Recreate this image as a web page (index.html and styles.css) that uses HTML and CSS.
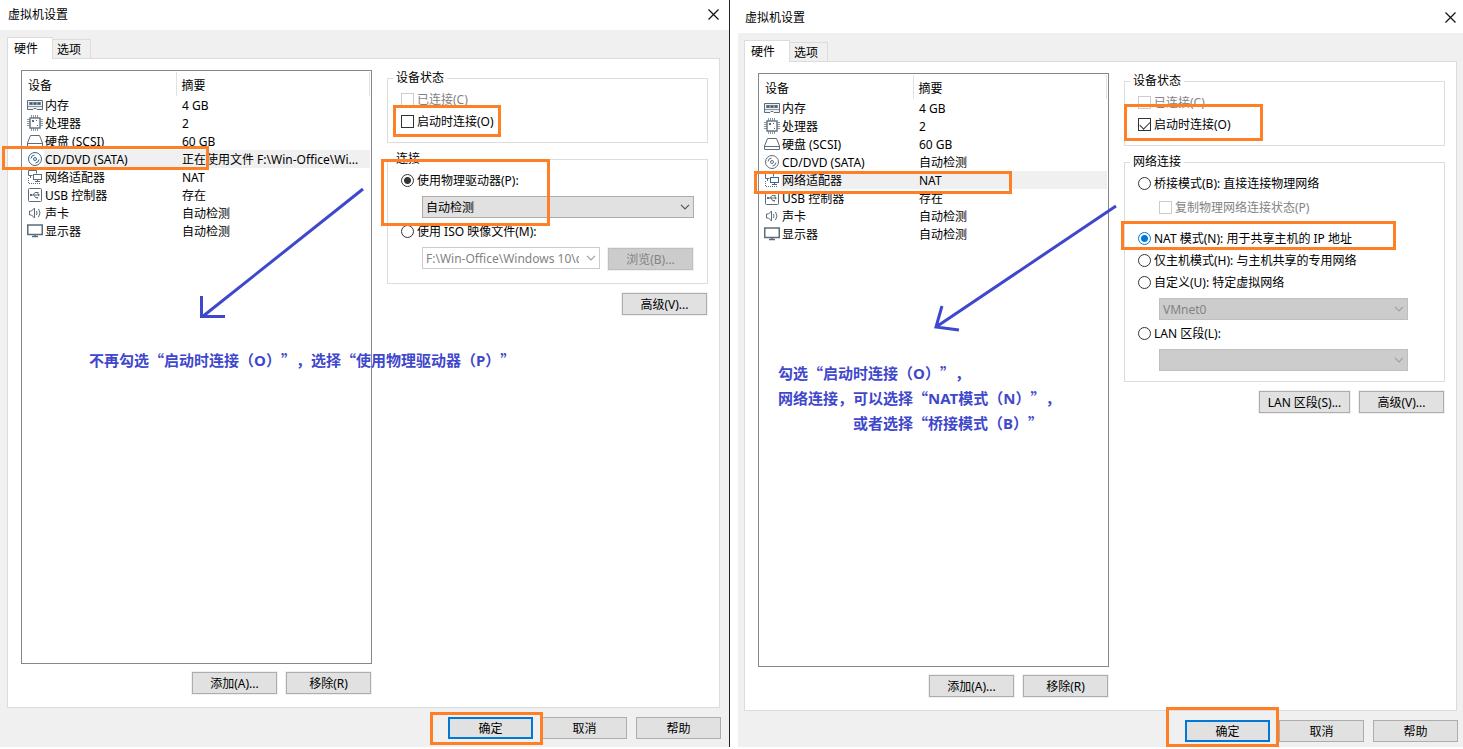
FILE: index.html
```html
<!DOCTYPE html>
<html lang="zh-CN">
<head>
<meta charset="utf-8">
<title>虚拟机设置</title>
<link rel="stylesheet" href="styles.css">
</head>
<body>
<svg class="sprite" aria-hidden="true">
  <symbol id="memory" viewBox="0 0 16 16"><path d="M.5 3.500h15v9H10l-1-1H7l-1 1H.5z" fill="#eef1f3" stroke="#5c6c7a"/><path d="M2 5h12v3H2z" fill="#8794a0"/><path d="M3 5.500h2v2H3zM7 5.500h2v2H7zM11 5.500h2v2h-2z" fill="#4a5a68"/><path d="M1 9.500h14" stroke="#8794a0"/></symbol>
  <symbol id="cpu" viewBox="0 0 16 16"><path d="M4.500 0v3M6.500 0v3M8.500 0v3M10.500 0v3M4.500 13v3M6.500 13v3M8.500 13v3M10.500 13v3M0 4.500h3M0 6.500h3M0 8.500h3M0 10.500h3M13 4.500h3M13 6.500h3M13 8.500h3M13 10.500h3" stroke="#8b97a2"/><rect x="3" y="3" width="10" height="10" fill="#fff" stroke="#6c7a87" stroke-width="1.500"/><path d="M5 5h2v2H5zM10 10h1v1h-1zM9 5h1v1H9z" fill="#5c6c7a"/></symbol>
  <symbol id="disk" viewBox="0 0 16 16"><path d="M3.500 2.500h9l3 7.500v3.500H.5V10z" fill="#fff" stroke="#5c6c7a"/><path d="M.5 10.500h15" stroke="#5c6c7a"/></symbol>
  <symbol id="disc" viewBox="0 0 16 16"><circle cx="8" cy="8" r="6.500" fill="#fff" stroke="currentColor"/><circle cx="8" cy="8" r="1.500" fill="none" stroke="currentColor"/><path d="M4 7.500A4 4 0 0 1 7.500 4M12 8.500A4 4 0 0 1 8.500 12" fill="none" stroke="currentColor"/></symbol>
  <symbol id="network" viewBox="0 0 16 16"><path d="M1.500 6.500v-5h8v3M1.500 6.500h4M3.500 7v2" fill="none" stroke="#5c6c7a"/><path d="M1.500 9v6M2 14.500h12" stroke="#5c6c7a" stroke-dasharray="1 1"/><rect x="6.500" y="5.500" width="8" height="5" fill="#fff" stroke="currentColor"/><path d="M10.500 11v2M8 12.500h5" stroke="currentColor"/></symbol>
  <symbol id="usb" viewBox="0 0 16 16"><rect x="1.500" y="1.500" width="13" height="13" rx="1" fill="#fff" stroke="#5c6c7a"/><path d="M4 8h8M6 8l2-2.500h2M7 8l1.500 2.500H10" fill="none" stroke="#5c6c7a"/><path d="M3 7h2v2H3zM10 5h1.500v1.500H10zM9.500 10H11v1.500H9.500zM11 6.500L13 8l-2 1.500z" fill="#5c6c7a"/></symbol>
  <symbol id="sound" viewBox="0 0 16 16"><path d="M2.500 6v4h2l3 3V3l-3 3z" fill="#fff" stroke="#5c6c7a"/><path d="M9.500 6q1 2 0 4M11.500 4q3 4 0 8" fill="none" stroke="#5c6c7a"/></symbol>
  <symbol id="display" viewBox="0 0 16 16"><rect x=".75" y="2" width="14.500" height="9.500" fill="#fff" stroke="#5c6c7a" stroke-width="1.500"/><path d="M5 13.500h6M8 12v2" stroke="#5c6c7a" stroke-width="1.500"/></symbol>
  <symbol id="close" viewBox="0 0 11 11"><path d="M.5.5l10 10M10.500.5l-10 10" stroke="#111" stroke-width="1.200"/></symbol>
  <symbol id="chevron" viewBox="0 0 10 6"><path d="M1 .8l4 4 4-4" fill="none" stroke="currentColor" stroke-width="1.200"/></symbol>
</svg>

<main class="desktop">
  <section class="window window-left" aria-label="虚拟机设置">
    <header class="titlebar">
      <h1 class="title">虚拟机设置</h1>
      <button class="close" type="button" aria-label="关闭"><svg><use href="#close"/></svg></button>
    </header>
    <div class="body">
      <nav class="tabs">
        <button class="tab tab-active" type="button">硬件</button>
        <button class="tab" type="button">选项</button>
      </nav>
      <div class="panel">
        <div class="devices">
          <div class="list">
            <table class="table">
              <thead><tr><th>设备</th><th>摘要</th></tr></thead>
              <tbody>
                <tr><td><div class="device"><svg><use href="#memory"/></svg><span>内存</span></div></td><td>4 GB</td></tr>
                <tr><td><div class="device"><svg><use href="#cpu"/></svg><span>处理器</span></div></td><td>2</td></tr>
                <tr><td><div class="device"><svg><use href="#disk"/></svg><span>硬盘 (SCSI)</span></div></td><td>60 GB</td></tr>
                <tr class="selected"><td><div class="device"><svg><use href="#disc"/></svg><span>CD/DVD (SATA)</span></div></td><td>正在使用文件 F:\Win-Office\Wi...</td></tr>
                <tr><td><div class="device"><svg><use href="#network"/></svg><span>网络适配器</span></div></td><td>NAT</td></tr>
                <tr><td><div class="device"><svg><use href="#usb"/></svg><span>USB 控制器</span></div></td><td>存在</td></tr>
                <tr><td><div class="device"><svg><use href="#sound"/></svg><span>声卡</span></div></td><td>自动检测</td></tr>
                <tr><td><div class="device"><svg><use href="#display"/></svg><span>显示器</span></div></td><td>自动检测</td></tr>
              </tbody>
            </table>
          </div>
          <div class="actions">
            <button class="button" type="button">添加(A)...</button>
            <button class="button" type="button">移除(R)</button>
          </div>
        </div>
        <form class="settings">
          <fieldset class="group">
            <legend>设备状态</legend>
            <label class="option off"><input type="checkbox" disabled>已连接(C)</label>
            <label class="option next"><input type="checkbox">启动时连接(O)</label>
          </fieldset>
          <fieldset class="group group-tall">
            <legend>连接</legend>
            <label class="option"><input type="radio" name="source" checked>使用物理驱动器(P):</label>
            <div class="combo">
              <select aria-label="物理驱动器"><option>自动检测</option></select>
              <svg><use href="#chevron"/></svg>
            </div>
            <label class="option after"><input type="radio" name="source">使用 ISO 映像文件(M):</label>
            <div class="file">
              <div class="combo combo-edit">
                <input type="text" aria-label="映像文件" value="F:\Win-Office\Windows 10\cn_windows_10.iso" disabled>
                <svg><use href="#chevron"/></svg>
              </div>
              <button class="button" type="button" disabled>浏览(B)...</button>
            </div>
          </fieldset>
          <div class="actions more"><button class="button" type="button">高级(V)...</button></div>
        </form>
      </div>
      <footer class="footer">
        <button class="button primary" type="button">确定</button>
        <button class="button" type="button">取消</button>
        <button class="button" type="button">帮助</button>
      </footer>
    </div>
    <i class="mark mark-disc"></i>
    <i class="mark mark-connect"></i>
    <i class="mark mark-drive"></i>
    <i class="mark mark-ok"></i>
    <svg class="arrow arrow-left" viewBox="0 0 166 134"><path d="M164 2L3 130M2.500 109v20.500H26" /></svg>
    <p class="note note-left">不再勾选“启动时连接（<b>O</b>）”，选择“使用物理驱动器（<b>P</b>）”</p>
  </section>

  <section class="window window-right" aria-label="虚拟机设置">
    <header class="titlebar">
      <h1 class="title">虚拟机设置</h1>
      <button class="close" type="button" aria-label="关闭"><svg><use href="#close"/></svg></button>
    </header>
    <div class="body">
      <nav class="tabs">
        <button class="tab tab-active" type="button">硬件</button>
        <button class="tab" type="button">选项</button>
      </nav>
      <div class="panel">
        <div class="devices">
          <div class="list">
            <table class="table">
              <thead><tr><th>设备</th><th>摘要</th></tr></thead>
              <tbody>
                <tr><td><div class="device"><svg><use href="#memory"/></svg><span>内存</span></div></td><td>4 GB</td></tr>
                <tr><td><div class="device"><svg><use href="#cpu"/></svg><span>处理器</span></div></td><td>2</td></tr>
                <tr><td><div class="device"><svg><use href="#disk"/></svg><span>硬盘 (SCSI)</span></div></td><td>60 GB</td></tr>
                <tr><td><div class="device"><svg><use href="#disc"/></svg><span>CD/DVD (SATA)</span></div></td><td>自动检测</td></tr>
                <tr class="selected"><td><div class="device"><svg><use href="#network"/></svg><span>网络适配器</span></div></td><td>NAT</td></tr>
                <tr><td><div class="device"><svg><use href="#usb"/></svg><span>USB 控制器</span></div></td><td>存在</td></tr>
                <tr><td><div class="device"><svg><use href="#sound"/></svg><span>声卡</span></div></td><td>自动检测</td></tr>
                <tr><td><div class="device"><svg><use href="#display"/></svg><span>显示器</span></div></td><td>自动检测</td></tr>
              </tbody>
            </table>
          </div>
          <div class="actions">
            <button class="button" type="button">添加(A)...</button>
            <button class="button" type="button">移除(R)</button>
          </div>
        </div>
        <form class="settings">
          <fieldset class="group">
            <legend>设备状态</legend>
            <label class="option off"><input type="checkbox" disabled>已连接(C)</label>
            <label class="option next"><input type="checkbox" checked>启动时连接(O)</label>
          </fieldset>
          <fieldset class="group">
            <legend>网络连接</legend>
            <label class="option"><input type="radio" name="network">桥接模式(B): 直接连接物理网络</label>
            <label class="option after sub off"><input type="checkbox" disabled>复制物理网络连接状态(P)</label>
            <label class="option apart"><input class="active" type="radio" name="network" checked>NAT 模式(N): 用于共享主机的 IP 地址</label>
            <label class="option next"><input type="radio" name="network">仅主机模式(H): 与主机共享的专用网络</label>
            <label class="option next"><input type="radio" name="network">自定义(U): 特定虚拟网络</label>
            <div class="combo combo-off">
              <select aria-label="虚拟网络" disabled><option>VMnet0</option></select>
              <svg><use href="#chevron"/></svg>
            </div>
            <label class="option after"><input type="radio" name="network">LAN 区段(L):</label>
            <div class="combo combo-off">
              <select aria-label="区段" disabled><option></option></select>
              <svg><use href="#chevron"/></svg>
            </div>
          </fieldset>
          <div class="actions more">
            <button class="button wide" type="button">LAN 区段(S)...</button>
            <button class="button" type="button">高级(V)...</button>
          </div>
        </form>
      </div>
      <footer class="footer">
        <button class="button primary" type="button">确定</button>
        <button class="button" type="button">取消</button>
        <button class="button" type="button">帮助</button>
      </footer>
    </div>
    <i class="mark mark-adapter"></i>
    <i class="mark mark-connect-on"></i>
    <i class="mark mark-nat"></i>
    <i class="mark mark-ok mark-ok-tall"></i>
    <svg class="arrow arrow-right" viewBox="0 0 186 128"><path d="M184 2L4 123M10 102L4 123l23 3" /></svg>
    <p class="note note-right">勾选“启动时连接（<b>O</b>）”，<br>网络连接，可以选择“<b>NAT</b>模式（<b>N</b>）”，<br><span class="indent">或者选择“桥接模式（<b>B</b>）”</span></p>
  </section>
</main>
</body>
</html>
```

FILE: styles.css
```css
* { box-sizing: border-box; }

body {
  margin: 0;
  background: #fff;
  color: #000;
  font: 12px/16px "Noto Sans", "Noto Sans CJK SC", sans-serif;
}

button, input, select { font: inherit; color: inherit; margin: 0; }

.sprite { display: none; }

.desktop {
  display: grid;
  grid-template-columns: 730fr 726fr;
  gap: 7px;
  min-height: 100vh;
  padding-bottom: 2px;
}

/* Window frame */
.window {
  --edge: 8px;
  position: relative;
  display: flex;
  flex-direction: column;
  min-width: 0;
}
.window-left { border-right: 1px solid #222; }
.window-right { --edge: 5px; margin-top: 3px; }

.titlebar {
  display: flex;
  align-items: center;
  justify-content: space-between;
  height: 30px;
  padding: 0 calc(var(--edge) + 2px) 2px 8px;
  background: #fff;
}
.title { margin: 0; padding-top: 2px; font-size: 12px; font-weight: 400; }
.close { display: flex; padding: 0; border: 0; background: none; }
.close svg { width: 11px; height: 11px; }

.body {
  flex: 1;
  display: flex;
  flex-direction: column;
  padding: 7px var(--edge) var(--edge) 7px;
  background: #f0f0f0;
}
.window-right .body { border-left: 1px solid #fff; padding-left: 6px; }

.tabs { display: flex; align-items: flex-end; height: 22px; margin-bottom: -1px; }
.tab {
  height: 20px;
  width: 38px;
  padding: 2px 0 0 4px;
  border: 1px solid #dcdcdc;
  border-left: 0;
  background: #f0f0f0;
  text-align: left;
}
.tab-active {
  position: relative;
  width: 46px;
  height: 22px;
  padding: 0 0 0 6px;
  border-left: 1px solid #dcdcdc;
  border-bottom: 0;
  background: #fff;
}

.panel {
  flex: 1;
  display: grid;
  grid-template-columns: 351fr 321fr;
  gap: 15px;
  margin-right: 1px;
  padding: 11px 11px 13px 13px;
  border: 1px solid #dcdcdc;
  background: #fff;
}

/* Device list */
.devices { display: flex; flex-direction: column; gap: 8px; min-width: 0; }
.list { flex: 1; padding: 1px; border: 1px solid #828790; }
.table { width: 100%; border-collapse: collapse; table-layout: fixed; }
.table th {
  height: 24px;
  padding: 4px 5px 0;
  border-right: 1px solid #e2e2e2;
  font-weight: 400;
  text-align: left;
}
.table th:first-child { width: 153px; }
.table td { height: 18px; padding: 2px 0 0 6px; white-space: nowrap; overflow: hidden; }
.table td:first-child { padding: 0; }
.device { display: flex; align-items: center; gap: 1px; padding-left: 4px; }
.device svg { flex: none; width: 16px; height: 16px; color: #5c6c7a; }
.device span { flex: 1; height: 18px; padding: 2px 0 0 1px; }
.selected td + td, .selected .device span { background: #f0f0f0; }
.selected .device svg { color: #35688f; }

/* Buttons */
.actions { display: flex; justify-content: flex-end; gap: 9px; padding-right: 1px; }
.button {
  width: 85px;
  height: 22px;
  padding: 2px 0 0;
  border: 1px solid #adadad;
  background: #e1e1e1;
  text-align: center;
}
.panel .button { box-shadow: 0 0 0 1px #f0f0f0; }
.button:disabled { border-color: #bfbfbf; background: #ccc; color: #838383; }
.primary { border: 2px solid #0078d7; }
.panel .wide { width: 91px; }
.footer { display: flex; justify-content: flex-end; gap: 9px; padding-top: 9px; }

/* Settings */
.settings { min-width: 0; }
.group {
  min-width: 0;
  margin: 0 0 8px;
  padding: 3px 13px 10px;
  border: 1px solid #dcdcdc;
}
.group-tall { padding-bottom: 13px; }
.group legend { height: 16px; margin-left: -8px; padding: 0 3px; }
.more { padding-top: 1px; }

.option { display: flex; align-items: center; gap: 3px; height: 21px; white-space: nowrap; }
.next { margin-top: 1px; }
.after { margin-top: 3px; }
.apart { margin-top: 10px; }
.sub { margin-left: 21px; }
.off { color: #838383; }

.option input {
  flex: none;
  appearance: none;
  width: 13px;
  height: 13px;
  border: 1px solid #333;
  background: #fff;
}
.option input:disabled { border-color: #ccc; }
.option input[type="radio"] { border-radius: 50%; }
.option input[type="radio"]:checked { background: radial-gradient(circle, #333 3px, #fff 4px); }
.option .active { border-color: #0078d7; }
.option input.active:checked { background: radial-gradient(circle, #0078d7 3px, #fff 4px); }
.option input[type="checkbox"]:checked::before {
  content: "";
  display: block;
  width: 9px;
  height: 5px;
  margin: 2px 0 0 1px;
  border: solid #333;
  border-width: 0 0 1px 1px;
  transform: rotate(-45deg);
}

.combo {
  position: relative;
  height: 22px;
  margin: 5px 0 0 21px;
  color: #000;
}
.combo select, .combo input {
  display: block;
  appearance: none;
  width: 100%;
  height: 22px;
  padding: 2px 20px 0 3px;
  border: 1px solid #adadad;
  border-radius: 0;
  background: #e1e1e1;
  opacity: 1;
}
.combo svg {
  position: absolute;
  right: 4px;
  top: 8px;
  width: 10px;
  height: 6px;
  color: #555;
}
.combo-off { margin-right: 23px; }
.combo-off select { border-color: #bfbfbf; background: #ccc; color: #838383; }
.combo-off svg { color: #a0a0a0; }
.file { display: flex; gap: 8px; margin: 5px 1px 0 21px; }
.combo-edit { flex: 1; margin: 0; }
.combo-edit input { padding-top: 0; border-color: #ccc; background: #fff; color: #838383; }
.combo-edit svg { color: #a0a0a0; }
.file .button { margin-top: 1px; }

/* Annotations */
.mark { position: absolute; border: 3px solid #ff7f27; pointer-events: none; }
.mark-disc { left: 2px; top: 146px; width: 207px; height: 24px; }
.mark-connect { left: 393px; top: 105px; width: 108px; height: 32px; }
.mark-drive { left: 381px; top: 159px; width: 169px; height: 67px; }
.mark-ok { right: 186px; bottom: 2px; width: 113px; height: 33px; }
.mark-ok-tall { right: 184px; bottom: 0; height: 40px; }
.mark-adapter { left: 17px; top: 168px; width: 258px; height: 23px; }
.mark-connect-on { left: 387px; top: 101px; width: 139px; height: 37px; }
.mark-nat { left: 384px; top: 218px; width: 275px; height: 29px; }

.arrow {
  position: absolute;
  fill: none;
  stroke: #3f48cc;
  stroke-width: 3px;
  pointer-events: none;
}
.arrow-left { left: 199px; top: 187px; width: 166px; height: 134px; }
.arrow-right { left: 195px; top: 201px; width: 186px; height: 128px; }

.note {
  position: absolute;
  margin: 0;
  color: #3f48cc;
  font: 700 15px/25px "Noto Sans CJK SC", sans-serif;
  text-spacing-trim: space-all;
  white-space: nowrap;
}
.note b { font-family: "Noto Sans", sans-serif; font-weight: 700; line-height: 1; }
.note-left { left: 89px; top: 347px; }
.note-right { left: 41px; top: 357px; }
.indent { padding-left: 75px; }
```
